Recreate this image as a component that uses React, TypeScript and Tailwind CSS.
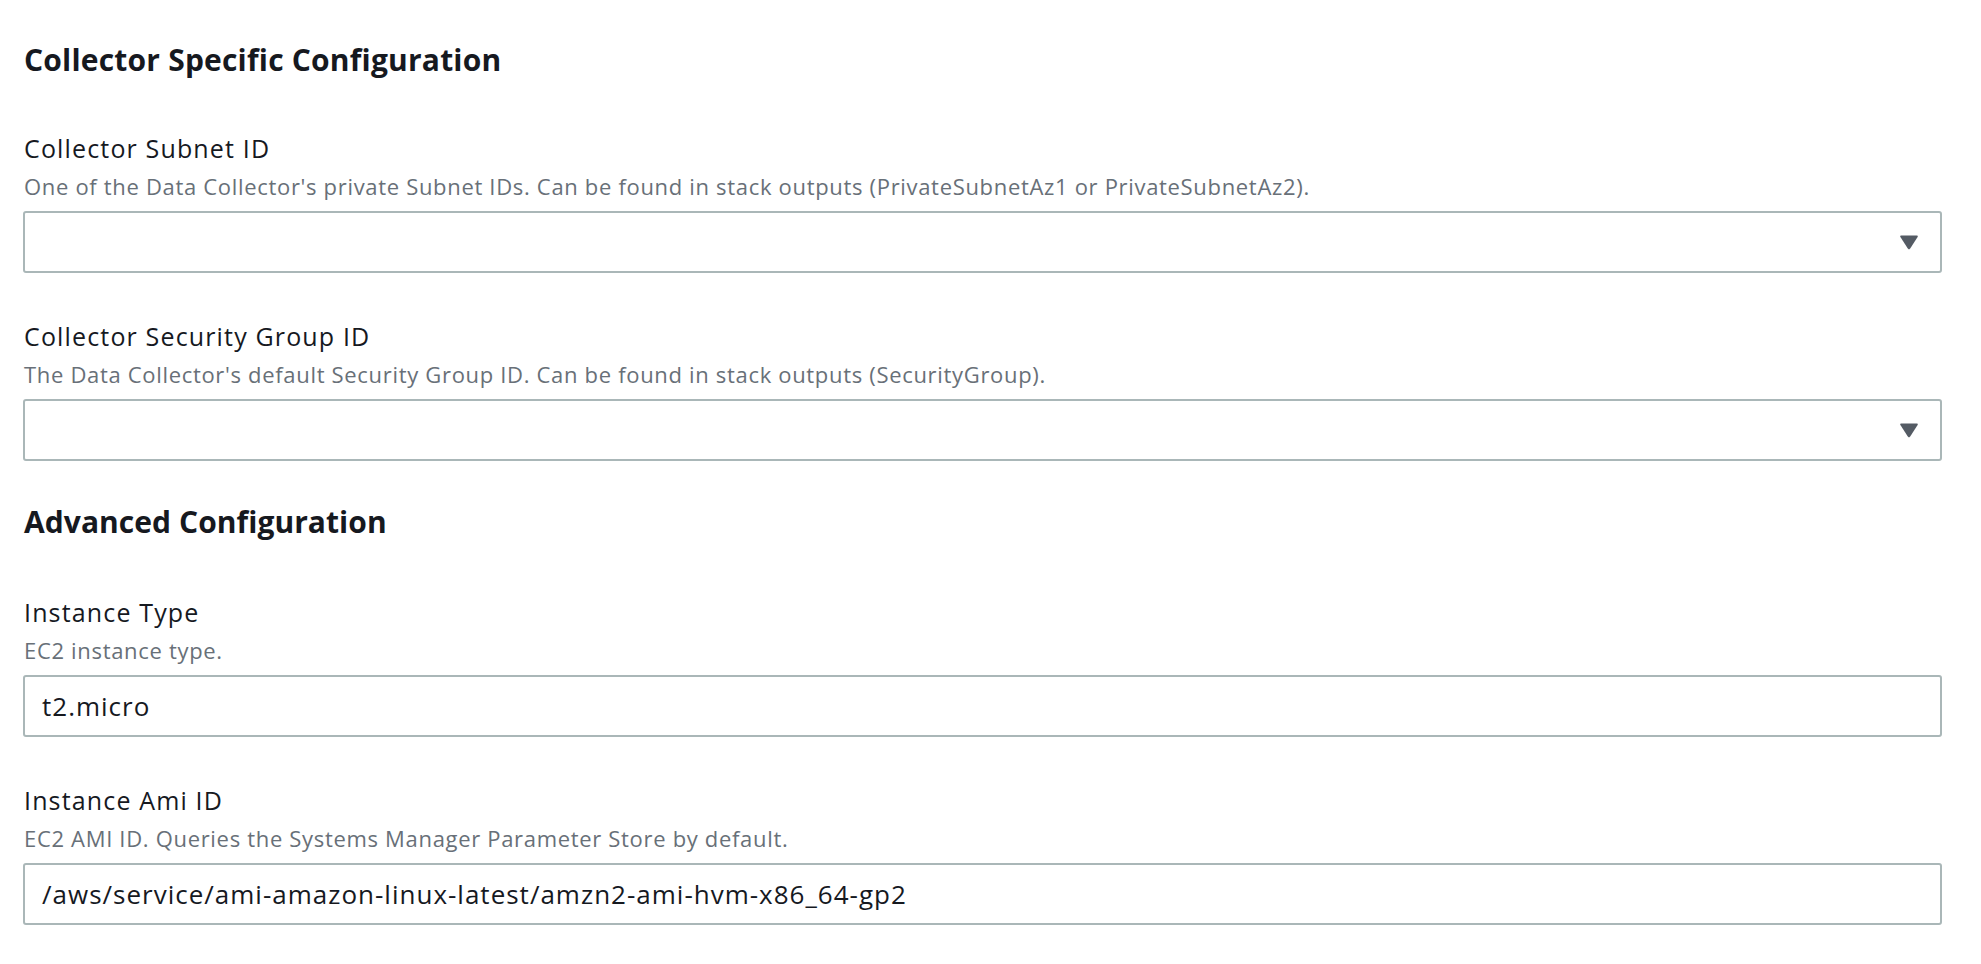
import React from "react";

const font = { fontFamily: '"Open Sans", "Noto Sans", sans-serif' };

function Caret() {
  return (
    <svg width="20" height="16" viewBox="0 0 20 16" className="shrink-0">
      <path
        d="M2.2 1.5 H17.8 Q19.4 1.5 18.6 2.9 L11.2 14.6 Q10 16.2 8.8 14.6 L1.4 2.9 Q0.6 1.5 2.2 1.5 Z"
        fill="#545b64"
      />
    </svg>
  );
}

function Field({
  label,
  desc,
  value,
  select,
}: {
  label: string;
  desc: string;
  value?: string;
  select?: boolean;
}) {
  return (
    <div className="flex flex-col">
      <div className="pl-px text-[25px] leading-[36px] tracking-[1.15px] text-[#16191f]">{label}</div>
      <div className="pl-px mt-[4px] text-[22px] leading-[32px] tracking-[0.68px] text-[#687078]">{desc}</div>
      <div className="mt-[9px] h-[62px] rounded-[3px] border-2 border-[#aab7b8] bg-white flex items-center pl-[17px] pr-[21px]">
        <div className="flex-1 text-[26px] tracking-[1px] text-[#16191f] whitespace-nowrap">{value ?? ""}</div>
        {select && <Caret />}
      </div>
    </div>
  );
}

export default function App() {
  return (
    <div style={font} className="w-[1981px] h-[964px] bg-white pl-[23px] pr-[39px] pt-[40px] overflow-hidden">
      <h2 className="pl-px text-[30px] leading-[40px] font-bold tracking-[0.2px] text-[#16191f]">
        Collector Specific Configuration
      </h2>
      <div className="mt-[50px] flex flex-col gap-[45px]">
        <Field
          label="Collector Subnet ID"
          desc="One of the Data Collector's private Subnet IDs. Can be found in stack outputs (PrivateSubnetAz1 or PrivateSubnetAz2)."
          select
        />
        <Field
          label="Collector Security Group ID"
          desc="The Data Collector's default Security Group ID. Can be found in stack outputs (SecurityGroup)."
          select
        />
      </div>
      <h2 className="mt-[41px] pl-px text-[30px] leading-[40px] font-bold tracking-[0.05px] text-[#16191f]">
        Advanced Configuration
      </h2>
      <div className="mt-[52px] flex flex-col gap-[45px]">
        <Field label="Instance Type" desc="EC2 instance type." value="t2.micro" />
        <Field
          label="Instance Ami ID"
          desc="EC2 AMI ID. Queries the Systems Manager Parameter Store by default."
          value="/aws/service/ami-amazon-linux-latest/amzn2-ami-hvm-x86_64-gp2"
        />
      </div>
    </div>
  );
}
